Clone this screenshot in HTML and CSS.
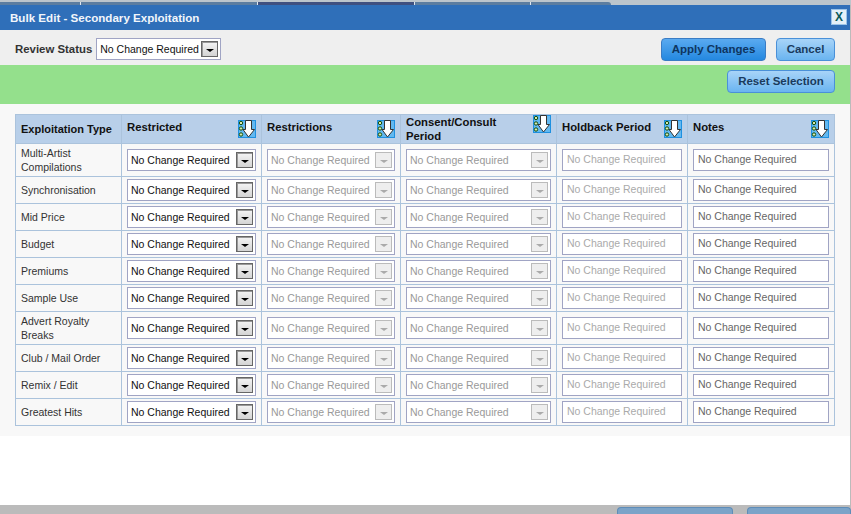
FILE: index.html
```html
<!DOCTYPE html>
<html lang="en">
<head>
  <meta charset="UTF-8">
  <meta name="viewport" content="width=device-width, initial-scale=1.0">
  <title>Bulk Edit - Secondary Exploitation</title>
  <link rel="stylesheet" href="styles.css">
</head>
<body>

<svg class="defs" width="0" height="0">
  <symbol id="fill-down" viewBox="0 0 18 18">
    <rect x="0.5" y="0.5" width="17" height="17" fill="#62b8f0" stroke="#1e90e0"/>
    <circle cx="3" cy="3" r="1.7" fill="#d8e8b0" stroke="#14500c"/>
    <circle cx="3" cy="8.5" r="1.7" fill="#d8e8b0" stroke="#14500c"/>
    <circle cx="3" cy="14.500" r="1.7" fill="#d8e8b0" stroke="#14500c"/>
    <path d="M7.500 0.5V9.500H5L10.500 17L16.500 9.500H13.500V0.5Z" fill="#fff" stroke="#333"/>
  </symbol>
</svg>

<div class="backdrop-top">
  <span class="bg-tab tab-a"></span>
  <span class="bg-tab tab-b"></span>
  <span class="bg-tab tab-c"></span>
  <span class="bg-tab tab-d"></span>
  <span class="bg-tab tab-e"></span>
</div>

<div class="dialog">
  <div class="title-bar">
    <span class="title">Bulk Edit - Secondary Exploitation</span>
    <button class="close-btn">X</button>
  </div>

  <div class="toolbar">
    <label class="review-label">Review Status</label>
    <div class="select review-select"><span>No Change Required</span><i class="arrow"></i></div>
    <div class="toolbar-actions">
      <button class="btn btn-primary">Apply Changes</button>
      <button class="btn btn-cancel">Cancel</button>
    </div>
  </div>

  <div class="green-bar">
    <button class="btn btn-reset">Reset Selection</button>
  </div>

  <div class="content">
    <table class="grid">
      <colgroup>
        <col class="c1"><col class="c2"><col class="c3"><col class="c4"><col class="c5"><col class="c6">
      </colgroup>
      <thead>
        <tr>
          <th class="first">Exploitation Type</th>
          <th><div class="th-inner"><span>Restricted</span><svg class="fill-icon"><use href="#fill-down"/></svg></div></th>
          <th><div class="th-inner"><span>Restrictions</span><svg class="fill-icon"><use href="#fill-down"/></svg></div></th>
          <th class="two-line"><div class="th-inner"><span>Consent/Consult Period</span><svg class="fill-icon"><use href="#fill-down"/></svg></div></th>
          <th><div class="th-inner"><span>Holdback Period</span><svg class="fill-icon"><use href="#fill-down"/></svg></div></th>
          <th><div class="th-inner"><span>Notes</span><svg class="fill-icon"><use href="#fill-down"/></svg></div></th>
        </tr>
      </thead>
      <tbody id="rows"></tbody>
    </table>
  </div>
</div>

<div class="backdrop-bottom">
  <span class="bg-btn btn-one"></span>
  <span class="bg-btn btn-two"></span>
</div>

<script>
  // Build the table rows
  const types = ["Multi-Artist Compilations", "Synchronisation", "Mid Price", "Budget", "Premiums",
    "Sample Use", "Advert Royalty Breaks", "Club / Mail Order", "Remix / Edit", "Greatest Hits"];
  const tall = ["Multi-Artist Compilations", "Advert Royalty Breaks"];
  const text = "No Change Required";

  const rows = document.getElementById("rows");
  types.forEach(type => {
    const row = document.createElement("tr");
    if (tall.includes(type)) row.className = "tall";
    row.innerHTML = `<td class="type">${type}</td>
      <td><div class="select"><span>${text}</span><i class="arrow"></i></div></td>
      <td><div class="select off"><span>${text}</span><i class="arrow"></i></div></td>
      <td><div class="select off"><span>${text}</span><i class="arrow"></i></div></td>
      <td><div class="field off">${text}</div></td>
      <td><div class="field notes">${text}</div></td>`;
    rows.appendChild(row);
  });
</script>

</body>
</html>
```

FILE: styles.css
```css
/* Basic styling */
* { box-sizing: border-box; margin: 0; padding: 0; }
html, body { height: 100%; }
body { width: 851px; height: 514px; overflow: hidden; display: flex; flex-direction: column; font-family: "Liberation Sans", Arial, sans-serif; font-size: 12px; color: #333; background-color: #bbb; }
.defs { position: absolute; }

/* Page behind the dialog */
.backdrop-top { height: 5px; display: flex; align-items: flex-end; background-color: #bcc5cc; flex-shrink: 0; }
.bg-tab { display: block; height: 3px; background-color: #5c7da0; border-right: 1px solid #dfe6ee; }
.tab-a { width: 81px; }
.tab-b { width: 177px; }
.tab-c { width: 157px; background-color: #3f5080; }
.tab-d { width: 116px; }
.tab-e { width: 80px; border-right: 0; border-radius: 0 3px 0 0; }
.backdrop-bottom { height: 9px; flex-shrink: 0; display: flex; gap: 14px; padding: 2px 0 0 617px; background-color: #bbb; }
.bg-btn { display: block; height: 7px; background-color: #7ba3c8; border: 1px solid #5f8db8; border-bottom: 0; border-radius: 4px 4px 0 0; }
.btn-one { width: 116px; }
.btn-two { width: 104px; }

/* Dialog */
.dialog { flex: 1; margin-right: 1px; background-color: #fff; display: flex; flex-direction: column; min-height: 0; }
.title-bar { height: 25px; display: flex; align-items: center; justify-content: space-between; padding: 0 3px 0 10px; background-color: #2f6fb9; flex-shrink: 0; }
.title { color: #f2f6fb; font-weight: bold; font-size: 11.6px; }
.close-btn { width: 16px; height: 16px; margin-top: -1px; border: 1px solid #9cc4e8; background-color: #e4f0f8; color: #0a5a5a; font: bold 12px "Liberation Sans", Arial, sans-serif; cursor: pointer; }

.toolbar { height: 35px; display: flex; align-items: center; padding: 0 15px; background-color: #efefef; flex-shrink: 0; }
.review-label { font-weight: bold; font-size: 11.4px; margin: 2px 4px 0 0; color: #333; }
.toolbar-actions { margin-left: auto; display: flex; gap: 10px; align-self: flex-start; margin-top: 8px; }

.btn { height: 23px; padding-bottom: 1px; border: 1px solid #4a90d8; border-radius: 4px; font: bold 11.500px "Liberation Sans", Arial, sans-serif; color: #1a3a5c; background: linear-gradient(#a8d4f8, #6ab4f0); cursor: pointer; }
.btn-primary { width: 105px; color: #0e3560; background: linear-gradient(#5aaaf0, #2488e0); border-color: #3a7cc4; }
.btn-cancel { width: 59px; }
.btn-reset { width: 108px; }

.green-bar { height: 39px; display: flex; justify-content: flex-end; align-items: flex-start; padding: 5px 15px 0 0; background-color: #94e08c; flex-shrink: 0; }

.content { height: 332px; padding: 10px 15px; background-color: #f8f8f8; flex-shrink: 0; }

/* Table */
.grid { width: 819px; table-layout: fixed; border-collapse: collapse; background-color: #f8f8f8; }
.c1 { width: 106px; }
.c2 { width: 140px; }
.c3 { width: 139px; }
.c4 { width: 156px; }
.c5 { width: 131px; }
.c6 { width: 147px; }
.grid th, .grid td { border: 1px solid #abc3dc; }
.grid th { height: 29px; padding: 0 5px; background-color: #b8cfe9; color: #111; font-size: 11.3px; font-weight: bold; text-align: left; }
.grid th.first { font-size: 11px; }
.grid th.two-line { vertical-align: top; }
.th-inner { display: flex; align-items: flex-start; justify-content: space-between; line-height: 14px; }
.two-line .th-inner span { width: 115px; }
.fill-icon { width: 18px; height: 18px; flex-shrink: 0; }
.grid td { height: 27px; padding: 0 5px; vertical-align: middle; }
.grid tr.tall td { height: 33px; }
.grid td.type { font-size: 10.5px; line-height: 14px; color: #333; }

/* Form controls */
.select { height: 22px; display: flex; align-items: center; justify-content: space-between; padding: 0 2px 0 3px; background-color: #fff; border: 1px solid #a0a4c4; color: #111; font-size: 10.5px; white-space: nowrap; }
.arrow { width: 17px; height: 16px; display: flex; align-items: center; justify-content: center; border: 1px solid #666; box-shadow: inset 1px 1px 0 #999; background: linear-gradient(#f4f4f4, #d4d4d4); }
.arrow::after { content: ""; border-left: 4px solid transparent; border-right: 4px solid transparent; border-top: 3px solid #000; margin-top: 3px; }
.select.off { color: #999; }
.select.off .arrow { border-color: #bbb; box-shadow: none; background: #eee; }
.select.off .arrow::after { border-top-color: #aaa; }
.review-select { width: 125px; margin-top: 3px; }
.field { height: 22px; line-height: 18px; padding: 0 4px; background-color: #fff; border: 1px solid #a0a4c4; font-size: 10.5px; white-space: nowrap; }
.field.off { color: #aaa; }
.field.notes { color: #666; }
```
